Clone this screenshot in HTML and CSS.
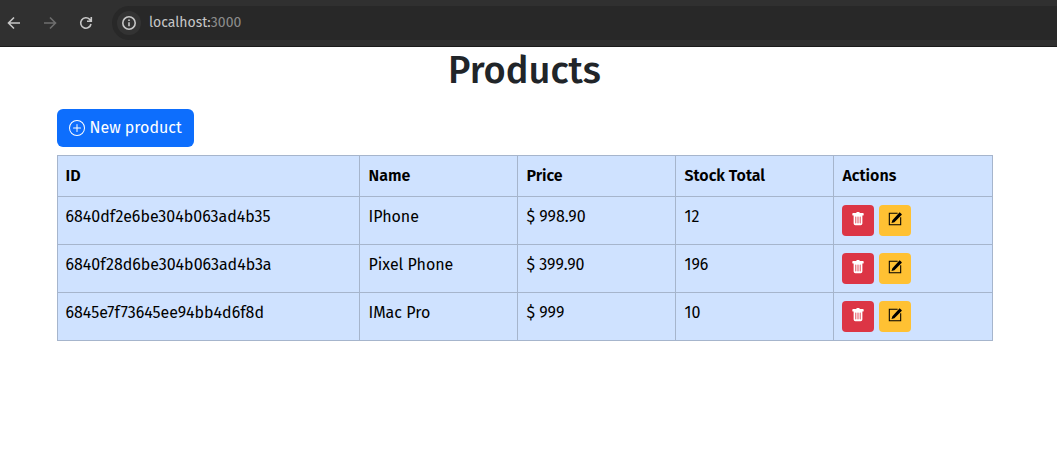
FILE: index.html
```html
<!DOCTYPE html>
<html lang="en">
<head>
<meta charset="utf-8">
<meta name="viewport" content="width=device-width, initial-scale=1">
<title>Products</title>
<link rel="stylesheet" href="styles.css">
</head>
<body>
<svg class="sprite" aria-hidden="true">
  <symbol id="trash" viewBox="0 0 16 16"><path d="M2.5 1a1 1 0 0 0-1 1v1a1 1 0 0 0 1 1H3v9a2 2 0 0 0 2 2h6a2 2 0 0 0 2-2V4h.5a1 1 0 0 0 1-1V2a1 1 0 0 0-1-1H10a1 1 0 0 0-1-1H7a1 1 0 0 0-1 1zm3 4a.5.5 0 0 1 .5.5v7a.5.5 0 0 1-1 0v-7a.5.5 0 0 1 .5-.5M8 5a.5.5 0 0 1 .5.5v7a.5.5 0 0 1-1 0v-7A.5.5 0 0 1 8 5m3 .5v7a.5.5 0 0 1-1 0v-7a.5.5 0 0 1 1 0"/></symbol>
  <symbol id="edit" viewBox="0 0 16 16"><path d="M11 1.500H1.500v13h13V6" fill="none" stroke="currentColor" stroke-width="1.200"/><path d="M13.300.5 15.500 2.700a.7.7 0 0 1 0 1L7.300 11.900 4 13l1-3.400L13.300.5z" transform="translate(0 -.3)"/></symbol>
</svg>
<header class="toolbar">
  <button class="nav" type="button" aria-label="Back"><svg viewBox="0 0 16 16"><path d="M14 8H3M8 2.500 2.500 8 8 13.500"/></svg></button>
  <button class="nav" type="button" aria-label="Forward" disabled><svg viewBox="0 0 16 16"><path d="M2 8h11M8 2.500 13.500 8 8 13.500"/></svg></button>
  <button class="nav" type="button" aria-label="Reload"><svg viewBox="0 0 16 16"><path d="M13 9a5.200 5.200 0 1 1-1.300-4.600L13 5.800M13.300 2v4.300H9"/></svg></button>
  <div class="address">
    <button class="info" type="button" aria-label="Site information"><svg viewBox="0 0 16 16"><circle cx="8" cy="8" r="6.200"/><path d="M8 7.200v4M8 4.500v1.500"/></svg></button>
    <span>localhost:<span class="port">3000</span></span>
  </div>
</header>
<div class="page">
  <main class="container">
    <h1>Products</h1>
    <button class="btn primary" type="button"><svg viewBox="0 0 16 16" aria-hidden="true"><path d="M8 15A7 7 0 1 1 8 1a7 7 0 0 1 0 14m0 1A8 8 0 1 0 8 0a8 8 0 0 0 0 16"/><path d="M8 4a.5.5 0 0 1 .5.5v3h3a.5.5 0 0 1 0 1h-3v3a.5.5 0 0 1-1 0v-3h-3a.5.5 0 0 1 0-1h3v-3A.5.5 0 0 1 8 4"/></svg>New product</button>
    <table>
      <colgroup><col class="wide"><col><col><col><col></colgroup>
      <thead><tr><th>ID</th><th>Name</th><th>Price</th><th>Stock Total</th><th>Actions</th></tr></thead>
      <tbody>
        <tr><td>6840df2e6be304b063ad4b35</td><td>IPhone</td><td>$ 998.90</td><td>12</td><td><div class="actions"><button class="btn small danger" type="button" aria-label="Delete IPhone"><svg><use href="#trash"/></svg></button><button class="btn small warning" type="button" aria-label="Edit IPhone"><svg><use href="#edit"/></svg></button></div></td></tr>
        <tr><td>6840f28d6be304b063ad4b3a</td><td>Pixel Phone</td><td>$ 399.90</td><td>196</td><td><div class="actions"><button class="btn small danger" type="button" aria-label="Delete Pixel Phone"><svg><use href="#trash"/></svg></button><button class="btn small warning" type="button" aria-label="Edit Pixel Phone"><svg><use href="#edit"/></svg></button></div></td></tr>
        <tr><td>6845e7f73645ee94bb4d6f8d</td><td>IMac Pro</td><td>$ 999</td><td>10</td><td><div class="actions"><button class="btn small danger" type="button" aria-label="Delete IMac Pro"><svg><use href="#trash"/></svg></button><button class="btn small warning" type="button" aria-label="Edit IMac Pro"><svg><use href="#edit"/></svg></button></div></td></tr>
      </tbody>
    </table>
  </main>
</div>
</body>
</html>
```
FILE: styles.css
```css
* { box-sizing: border-box; }
body {
  margin: 0;
  background: #fff;
  color: #212529;
  font: 16px/24px "Fira Sans", "Noto Sans", sans-serif;
}
button { font: inherit; border: 0; cursor: pointer; }
.sprite { display: none; }

.toolbar {
  display: flex;
  align-items: center;
  height: 47px;
  padding-left: 6px;
  gap: 20px;
  background: #303030;
  border-bottom: 1px solid #1c1c1c;
}
.toolbar svg {
  display: block;
  width: 16px;
  height: 16px;
  fill: none;
  stroke: currentColor;
  stroke-width: 1.6;
}
.nav { padding: 0; background: none; color: #c7c7c7; }
.nav:disabled { color: #6e6e6e; }
.address {
  flex: 1;
  display: flex;
  align-items: center;
  gap: 8px;
  height: 34px;
  margin-left: -2px;
  padding-left: 5px;
  border-radius: 17px 0 0 17px;
  background: #282828;
  color: #c7c7c7;
  font-size: 14px;
}
.info {
  padding: 4px;
  border-radius: 50%;
  background: #333;
  color: #c7c7c7;
}
.address .port { color: #8c8c8c; }

.page { padding-right: 8px; }
.container { max-width: 960px; margin: 0 auto; padding: 0 12px; }
h1 {
  margin: 0 0 16px;
  font-size: 38px;
  line-height: 46px;
  font-weight: 500;
  text-align: center;
}
.btn {
  display: inline-flex;
  align-items: center;
  justify-content: center;
  gap: 5px;
  border-radius: 6px;
}
.btn svg { width: 16px; height: 16px; fill: currentColor; }
.primary { height: 38px; padding: 0 12px 1px; background: #0d6efd; color: #fff; }
.small { width: 32px; height: 31px; padding: 0 0 3px; border-radius: 4px; }
.small svg { width: 14px; height: 14px; }
.danger { background: #dc3545; color: #fff; }
.warning { background: #ffc133; color: #000; }

table {
  width: 100%;
  margin-top: 8px;
  border-collapse: collapse;
  table-layout: fixed;
  background: #cfe2ff;
  color: #000;
}
col { width: 16.9%; }
.wide { width: 32.4%; }
th, td {
  padding: 8px;
  border: 1px solid #a6b5cc;
  text-align: left;
  vertical-align: top;
}
th { font-weight: 600; }
.actions { display: flex; gap: 5px; }
```
